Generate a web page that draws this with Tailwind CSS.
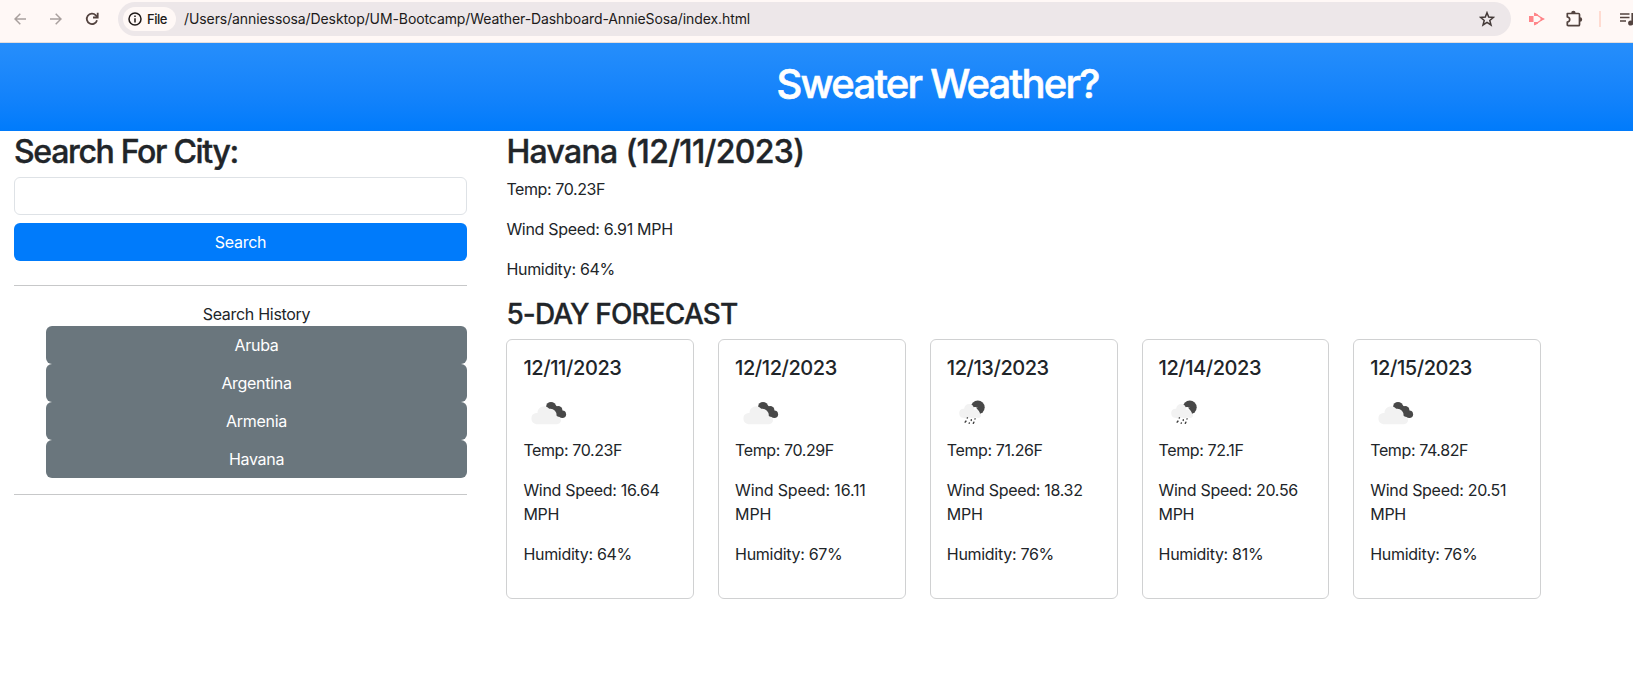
<!DOCTYPE html>
<html lang="en">
<head>
<meta charset="utf-8">
<title>Weather Dashboard</title>
<script src="https://cdn.jsdelivr.net/npm/@tailwindcss/browser@4"></script>
</head>
<body class="h-[682px] overflow-hidden bg-white font-['Inter','Liberation_Sans',sans-serif] text-base tracking-[-0.3px] text-[#212529]">

<svg class="hidden">
  <symbol id="clouds" viewBox="0 0 50 50">
    <g fill="#484848">
      <circle cx="28" cy="18.800" r="4.900"/><circle cx="35.200" cy="22.300" r="4.200"/><circle cx="39.300" cy="26.200" r="3.800"/><path d="M25.500 22 31 15.500l8 8-3 6.500z"/>
    </g>
    <path d="M13.500 36.200a5.600 5.600 0 0 1-.4-11.100c.6-.1 1-.1 1.400 0A6.600 6.600 0 0 1 26.300 20.800a6.500 6.500 0 0 1 7.400 7.500c2.900.2 4.300 2.100 4.300 4 0 2.200-1.700 3.900-3.900 3.900z" fill="#f2f2f2"/>
  </symbol>
  <symbol id="rain" viewBox="0 0 50 50">
    <circle cx="30.800" cy="19.300" r="6.900" fill="#484848"/>
    <circle cx="28" cy="23.600" r="4.700" fill="#fff"/>
    <path d="M29 19.500 35 20l.5 4.500-3-.5z" fill="#484848"/>
    <path d="M16.200 29.700a4.500 4.500 0 0 1-.3-8.900l1.300-.1a5 5 0 0 1 8.600-3.200 5.300 5.300 0 0 1 1 4.200 4.600 4.600 0 0 1 5.700 3.200 2.600 2.600 0 0 1 0 4.800c-1.300.5-3 .2-4.200-.5-1.500 1.200-3.700 1.300-5.500.3-1.900 1.200-4.600 1.300-6.600.2z" fill="#f2f2f2"/>
    <path d="m20.400 29.800-.1.300m4.100 2-.2.300m3.900-1.600-.1.200m-9.400 2.200-.5 1m4.300.7-.2.400m2.100-3.600-.1.200m2.700 2.300-.6 1.100m-7.300-2.100-.1.200" stroke="#404040" stroke-width="1.400" stroke-linecap="round" fill="none"/>
  </symbol>
</svg>

<!-- Browser toolbar -->
<div class="flex h-[43px] items-start border-b border-[#e4dedd] bg-[#fff8f6] pt-[2px]">
  <div class="flex h-[34px] w-[118px] shrink-0 items-center">
    <svg class="ml-[14px] size-3 shrink-0" viewBox="0 0 12 12" fill="none" stroke="#a9a09e" stroke-width="1.500"><path d="M12 6H1M6.300.7 1 6l5.300 5.300"/></svg>
    <svg class="ml-6 size-3 shrink-0" viewBox="0 0 12 12" fill="none" stroke="#a9a09e" stroke-width="1.500"><path d="M0 6h11M5.700.7 11 6l-5.300 5.300"/></svg>
    <svg class="ml-[23px] size-[14px] shrink-0" viewBox="0 0 14 14" fill="none" stroke="#53433f" stroke-width="1.800"><path d="M12 8.200A5.200 5.200 0 1 1 10.800 3.300L12.300 5"/><path d="M12.700.8v4.700H8"/></svg>
  </div>
  <div class="flex h-[34px] w-[1393px] shrink-0 items-center rounded-full bg-[#ede7e9] pl-[5px] pr-4">
    <div class="flex h-6 w-[53px] items-center rounded-full bg-[#fff8f6] pl-[5px]">
      <svg class="size-[14px]" viewBox="0 0 14 14"><circle cx="7" cy="7" r="6" fill="none" stroke="#201a19" stroke-width="1.500"/><path d="M6.250 6.200h1.500v4.200h-1.500zM6.250 3.600h1.500v1.500h-1.500z" fill="#201a19"/></svg>
      <span class="ml-[5px] text-[13px] leading-6 font-medium tracking-[-0.45px] text-[#201a19]">File</span>
    </div>
    <span class="ml-2 text-sm whitespace-nowrap tracking-[-0.09px] text-[#201a19]">/Users/anniessosa/Desktop/UM-Bootcamp/Weather-Dashboard-AnnieSosa/index.html</span>
    <svg class="ml-auto size-4" viewBox="0 0 16 16" fill="none" stroke="#443a38" stroke-width="1.500"><path d="m8 1.700 1.700 4.400 4.700.3-3.600 3 1.200 4.600L8 11.400 4 14l1.200-4.600-3.600-3 4.700-.3z"/></svg>
  </div>
  <div class="flex h-[34px] shrink-0 items-center">
    <svg class="ml-[18px] h-[14px] w-4" viewBox="0 0 16 14"><path d="M0 4h4.500v6H0z" fill="#ff8589"/><path d="M5.800 1.500 14 7l-8.200 5.500" fill="none" stroke="#ff8589" stroke-width="1.300"/><path d="M5 .5l4 2v1.500H5zM5 13.500l4-2V10H5zM11.500 5 16 7l-4.500 2z" fill="#ff8589"/></svg>
    <svg class="ml-5 h-[18px] w-[18px]" viewBox="0 0 18 18"><path d="M2.300 3.500h11.200q1 0 1 1v10.200q0 1-1 1H3.300q-1 0-1-1v-2.600c3.200-.6 3.200-4.600 0-5.200z" fill="none" stroke="#53433f" stroke-width="1.700" stroke-linejoin="round"/><path d="M6.200 3a2.200 2.200 0 0 1 4.400 0zM15 7.300a2.200 2.200 0 0 1 0 4.400z" fill="#53433f"/></svg>
    <span class="ml-[16px] h-4 w-[2px] bg-[#ffdbd1]"></span>
    <svg class="ml-[19px] h-[14px] w-4 shrink-0" viewBox="0 0 16 14"><path d="M0 2h9.500M0 5.500h9.500M0 9h6" stroke="#53433f" stroke-width="1.600"/><path d="M16 1.800h-3.700v9" fill="none" stroke="#53433f" stroke-width="1.800"/><circle cx="10.700" cy="11" r="2.600" fill="#53433f"/></svg>
  </div>
</div>

<header class="h-[88px] bg-linear-to-b from-[#268efb] to-[#007bfb] pt-[17px] pl-[242px]">
  <h1 class="text-center text-[40px] leading-[48px] font-medium tracking-[-1.77px] text-white [-webkit-text-stroke:0.6px_white]">Sweater Weather?</h1>
</header>

<main class="flex">
  <aside class="w-[467px] shrink-0 pl-[14px]">
    <h2 class="h-[38px] pt-px text-[32px] leading-[39px] font-medium tracking-[-1.32px] [-webkit-text-stroke:0.4px_#212529]">Search For City:</h2>
    <input type="text" class="mt-2 block h-[38px] w-full rounded-md border border-[#dee2e6] bg-white px-3">
    <button class="mt-2 block h-[38px] w-full rounded-md bg-[#007bfb] text-white">Search</button>
    <hr class="mt-6 border-t border-[#c7c8c9]">
    <div class="mt-4 pl-8 text-center">
      <p class="leading-6">Search History</p>
      <button class="block h-[38px] w-full rounded-md bg-[#6a767d] text-white">Aruba</button>
      <button class="block h-[38px] w-full rounded-md bg-[#6a767d] text-white">Argentina</button>
      <button class="block h-[38px] w-full rounded-md bg-[#6a767d] text-white">Armenia</button>
      <button class="block h-[38px] w-full rounded-md bg-[#6a767d] text-white">Havana</button>
    </div>
    <hr class="mt-4 border-t border-[#c7c8c9]">
  </aside>

  <section class="ml-[39.400px] w-[1034.600px] shrink-0">
    <h2 class="h-[38px] pt-px text-[32px] leading-[39px] font-medium tracking-[-0.68px] [-webkit-text-stroke:0.4px_#212529]">Havana (12/11/2023)</h2>
    <div class="mt-2 flex flex-col gap-4 leading-6">
      <p class="tracking-[-0.4px]">Temp: 70.23F</p>
      <p>Wind Speed: 6.91 MPH</p>
      <p>Humidity: 64%</p>
    </div>
    <h3 class="mt-4 text-[28px] leading-[34px] font-medium tracking-[-0.87px] [-webkit-text-stroke:0.3px_#212529]">5-DAY FORECAST</h3>
    <div class="mt-2 grid grid-cols-5 gap-6">
      <article class="h-[260px] rounded-md border border-[#d0d1d2] p-4">
        <h5 class="text-xl leading-6 font-medium tracking-[-0.4px]">12/11/2023</h5>
        <svg class="mt-2 size-[50px]"><use href="#clouds"/></svg>
        <div class="flex flex-col gap-4 leading-6"><p class="tracking-[-0.4px]">Temp: 70.23F</p><p>Wind Speed: 16.64 MPH</p><p>Humidity: 64%</p></div>
      </article>
      <article class="h-[260px] rounded-md border border-[#d0d1d2] p-4">
        <h5 class="text-xl leading-6 font-medium tracking-[-0.45px]">12/12/2023</h5>
        <svg class="mt-2 size-[50px]"><use href="#clouds"/></svg>
        <div class="flex flex-col gap-4 leading-6"><p class="tracking-[-0.4px]">Temp: 70.29F</p><p class="tracking-[-0.15px]">Wind Speed: 16.11 MPH</p><p>Humidity: 67%</p></div>
      </article>
      <article class="h-[260px] rounded-md border border-[#d0d1d2] p-4">
        <h5 class="text-xl leading-6 font-medium tracking-[-0.45px]">12/13/2023</h5>
        <svg class="mt-2 size-[50px]"><use href="#rain"/></svg>
        <div class="flex flex-col gap-4 leading-6"><p class="tracking-[-0.4px]">Temp: 71.26F</p><p>Wind Speed: 18.32 MPH</p><p>Humidity: 76%</p></div>
      </article>
      <article class="h-[260px] rounded-md border border-[#d0d1d2] p-4">
        <h5 class="text-xl leading-6 font-medium tracking-[-0.45px]">12/14/2023</h5>
        <svg class="mt-2 size-[50px]"><use href="#rain"/></svg>
        <div class="flex flex-col gap-4 leading-6"><p class="tracking-[-0.4px]">Temp: 72.1F</p><p>Wind Speed: 20.56 MPH</p><p>Humidity: 81%</p></div>
      </article>
      <article class="h-[260px] rounded-md border border-[#d0d1d2] p-4">
        <h5 class="text-xl leading-6 font-medium tracking-[-0.45px]">12/15/2023</h5>
        <svg class="mt-2 size-[50px]"><use href="#clouds"/></svg>
        <div class="flex flex-col gap-4 leading-6"><p class="tracking-[-0.4px]">Temp: 74.82F</p><p>Wind Speed: 20.51 MPH</p><p>Humidity: 76%</p></div>
      </article>
    </div>
  </section>
</main>
</body>
</html>
